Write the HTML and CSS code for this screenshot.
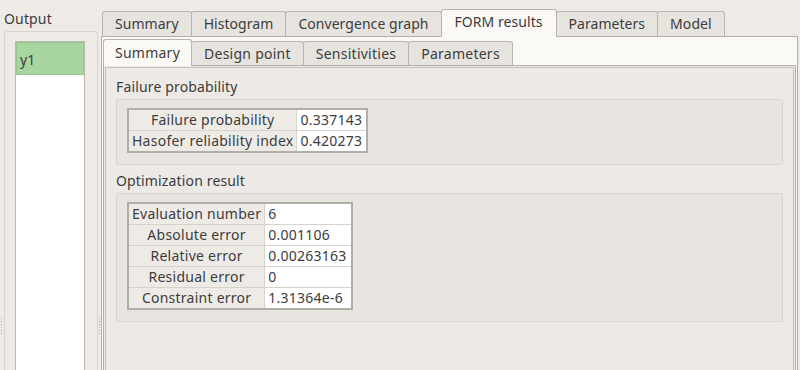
FILE: index.html
```html
<!DOCTYPE html>
<html lang="en">
<head>
  <meta charset="UTF-8" />
  <title>FORM results</title>
  <link rel="stylesheet" href="styles.css">
</head>
<body>
  <div class="app">
    <div class="splitter"><span class="grip"></span></div>
    <aside class="side">
      <div class="side-title">Output</div>
      <div class="side-box">
        <ul class="list">
          <li class="sel">y1</li>
        </ul>
      </div>
    </aside>
    <div class="splitter"><span class="grip"></span></div>

    <main class="tabs outer">
      <div class="tabbar">
        <div class="tab">Summary</div>
        <div class="tab">Histogram</div>
        <div class="tab">Convergence graph</div>
        <div class="tab active">FORM results</div>
        <div class="tab">Parameters</div>
        <div class="tab">Model</div>
      </div>
      <div class="pane">
        <div class="tabs inner">
          <div class="tabbar">
            <div class="tab active">Summary</div>
            <div class="tab">Design point</div>
            <div class="tab">Sensitivities</div>
            <div class="tab">Parameters</div>
          </div>
          <div class="pane">
            <div class="scroll">
              <div class="grp-title">Failure probability</div>
              <div class="grp">
                <table>
                  <tr><th>Failure probability</th><td>0.337143</td></tr>
                  <tr><th>Hasofer reliability index</th><td>0.420273</td></tr>
                </table>
              </div>

              <div class="grp-title">Optimization result</div>
              <div class="grp">
                <table>
                  <tr><th>Evaluation number</th><td>6</td></tr>
                  <tr><th>Absolute error</th><td>0.001106</td></tr>
                  <tr><th>Relative error</th><td>0.00263163</td></tr>
                  <tr><th>Residual error</th><td>0</td></tr>
                  <tr><th>Constraint error</th><td>1.31364e-6</td></tr>
                </table>
              </div>
            </div>
          </div>
        </div>
      </div>
    </main>
  </div>
</body>
</html>
```

FILE: styles.css
```css
html, body {
  margin: 0;
  height: 100%;
}
body {
  background: #eeebe7;
  color: #3c3c3c;
  font-family: 'Noto Sans', 'DejaVu Sans', sans-serif;
  font-size: 14px;
  line-height: 17px;
  letter-spacing: 0.15px;
  overflow: hidden;
}
.app {
  display: flex;
  height: 420px;
}

/* splitters */
.splitter {
  width: 3px;
  flex: none;
  display: flex;
  justify-content: center;
}
.splitter:first-child {
  width: 4px;
  justify-content: flex-start;
  padding-left: 1px;
  box-sizing: border-box;
}
.grip {
  width: 1px;
  height: 17px;
  margin-top: 318px;
  background: repeating-linear-gradient(to bottom, #a9a5a0 0 1px, transparent 1px 3px);
}

/* left output panel */
.side {
  width: 94px;
  flex: none;
  display: flex;
  flex-direction: column;
}
.side-title {
  margin-top: 10px;
  height: 17px;
}
.side-box {
  flex: 1;
  margin-top: 4px;
  border: 1px solid #d7d3ce;
  border-radius: 3px;
  padding: 9px 12px 0 10px;
}
.list {
  list-style: none;
  margin: 0;
  padding: 0;
  height: 100%;
  background: #fff;
  border: 1px solid #bbb7b2;
}
.list li {
  height: 31px;
  line-height: 33px;
  padding-left: 3px;
}
.list li.sel {
  background: #a9d5a1;
  border: 1px solid #96c78d;
}

/* tab widgets */
.tabs {
  display: flex;
  flex-direction: column;
}
.outer {
  flex: 1;
  margin-right: 2px;
}
.tabbar {
  display: flex;
  align-items: flex-end;
  position: relative;
  z-index: 1;
}
.outer > .tabbar {
  padding: 9px 0 0 1px;
}
.inner > .tabbar {
  padding-top: 2px;
}
.tab {
  height: 24px;
  line-height: 24px;
  padding: 0 12px;
  background: #e7e4e0;
  border: 1px solid #b8b4af;
  border-bottom: none;
  border-radius: 3px 3px 0 0;
  margin-right: -1px;
  white-space: nowrap;
}
.tab.active {
  height: 27px;
  line-height: 24px;
  background: #fbf9f6;
  margin-bottom: -1px;
}
.outer > .tabbar .tab {
  letter-spacing: 0.05px;
}
.outer > .tabbar .tab.active {
  padding: 0 13px;
}
.pane {
  flex: 1;
  border: 1px solid #b3afaa;
  display: flex;
  flex-direction: column;
}
.outer > .pane {
  background: #fbf9f6;
  padding: 0 1px;
}
.inner {
  flex: 1;
}
.inner > .tabbar .tab {
  height: 23px;
  line-height: 23px;
  letter-spacing: 0.25px;
}
.inner > .tabbar .tab.active {
  height: 26px;
  line-height: 25px;
  padding: 0 11px;
}
.inner > .pane {
  background: #edeae6;
  padding: 1px;
}

/* scroll area content */
.scroll {
  flex: 1;
  border: 1px solid #c4c0bb;
  padding: 10px;
}
.grp-title {
  height: 17px;
}
.grp {
  margin: 4px 0 7px;
  background: #e8e5e1;
  border: 1px solid #d8d4cf;
  border-radius: 2px;
  padding: 8px 10px 11px;
}
table {
  border: 2px solid #b1ada8;
  border-spacing: 0;
  background: #fff;
  letter-spacing: 0.25px;
}
th, td {
  height: 20px;
  line-height: 20px;
  padding: 0 3px;
  font-weight: normal;
  white-space: nowrap;
  border-bottom: 1px solid #d6d2cd;
}
tr:last-child th, tr:last-child td {
  border-bottom: none;
}
th {
  background: #eeebe7;
  text-align: center;
  border-right: 1px solid #d6d2cd;
}
td {
  text-align: left;
  padding-right: 4px;
}
```
